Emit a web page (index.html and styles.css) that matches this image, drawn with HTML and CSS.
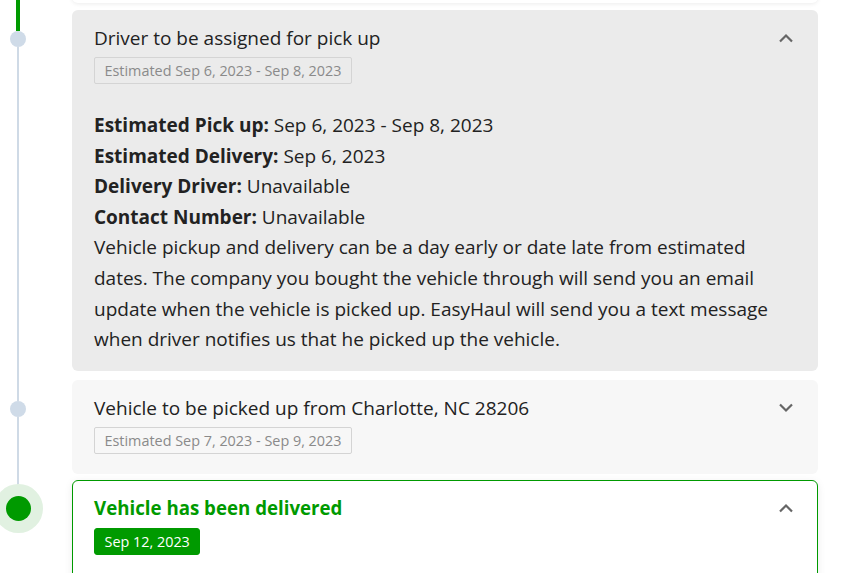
FILE: index.html
```html
<!DOCTYPE html>
<html>
<head>
<meta charset="utf-8">
<link rel="stylesheet" href="styles.css">
</head>
<body>
<div class="timeline">
  <div class="item item-prev">
    <div class="rail"><span class="seg seg-green grow"></span></div>
    <div class="card card-white"><div class="spacer"></div></div>
  </div>

  <div class="item">
    <div class="rail">
      <span class="seg seg-green top"></span>
      <span class="dot"></span>
      <span class="seg grow"></span>
    </div>
    <div class="card card-open">
      <div class="head">
        <div class="head-text">
          <div class="title">Driver to be assigned for pick up</div>
          <span class="badge">Estimated Sep 6, 2023 - Sep 8, 2023</span>
        </div>
        <svg class="chev" viewBox="0 0 16 10" width="16" height="10"><path d="M2 8.5 L8 2.5 L14 8.5" fill="none" stroke="#666" stroke-width="2.2"/></svg>
      </div>
      <div class="body">
        <p><b>Estimated Pick up:</b> Sep 6, 2023 - Sep 8, 2023</p>
        <p><b>Estimated Delivery:</b> Sep 6, 2023</p>
        <p><b>Delivery Driver:</b> Unavailable</p>
        <p><b>Contact Number:</b> Unavailable</p>
        <p>Vehicle pickup and delivery can be a day early or date late from estimated dates. The company you bought the vehicle through will send you an email update when the vehicle is picked up. EasyHaul will send you a text message when driver notifies us that he picked up the vehicle.</p>
      </div>
    </div>
  </div>

  <div class="item">
    <div class="rail">
      <span class="seg top2"></span>
      <span class="dot"></span>
      <span class="seg grow"></span>
    </div>
    <div class="card card-closed">
      <div class="head">
        <div class="head-text">
          <div class="title">Vehicle to be picked up from Charlotte, NC 28206</div>
          <span class="badge">Estimated Sep 7, 2023 - Sep 9, 2023</span>
        </div>
        <svg class="chev" viewBox="0 0 16 10" width="16" height="10"><path d="M2 1.5 L8 7.5 L14 1.5" fill="none" stroke="#666" stroke-width="2.2"/></svg>
      </div>
    </div>
  </div>

  <div class="item">
    <div class="rail">
      <span class="seg top3"></span>
      <span class="dot-big"></span>
    </div>
    <div class="card card-done">
      <div class="head">
        <div class="head-text">
          <div class="title title-green">Vehicle has been delivered</div>
          <span class="badge badge-green">Sep 12, 2023</span>
        </div>
        <svg class="chev" viewBox="0 0 16 10" width="16" height="10"><path d="M2 8.5 L8 2.5 L14 8.5" fill="none" stroke="#666" stroke-width="2.2"/></svg>
      </div>
      <div class="spacer2"></div>
    </div>
  </div>
</div>
</body>
</html>
```

FILE: styles.css
```css
html, body {
  margin: 0;
  padding: 0;
  background: #ffffff;
  overflow: hidden;
}
body {
  font-family: "Open Sans", "Noto Sans", "Liberation Sans", sans-serif;
  color: #222;
}
.timeline {
  width: 818px;
  margin-top: -60px;
}
.item {
  display: grid;
  grid-template-columns: 36px 1fr;
  column-gap: 36px;
}
.rail {
  display: flex;
  flex-direction: column;
  align-items: center;
}
.seg {
  width: 2px;
  background: #cfdae6;
}
.seg-green {
  width: 4px;
  background: #009a00;
}
.grow { flex: 1; }
.top { height: 21px; }
.top2 { height: 21px; }
.top3 { height: 16px; }
.dot {
  width: 16px;
  height: 16px;
  border-radius: 50%;
  background: #cfdbe8;
  flex: none;
}
.dot-big {
  width: 25px;
  height: 25px;
  border-radius: 50%;
  background: #009a00;
  box-shadow: 0 0 0 12px #e1f1e1;
  flex: none;
}
.card {
  border-radius: 6px;
  margin-bottom: 7px;
}
.card-white {
  background: #fff;
  box-shadow: 0 1px 4px rgba(0,0,0,0.08);
}
.spacer { height: 63px; }
.card-open {
  background: #ebebeb;
  margin-bottom: 9px;
}
.card-closed {
  background: #f7f7f7;
  margin-bottom: 6px;
}
.card-done {
  background: #fff;
  border: 1px solid #009a00;
  box-shadow: 0 2px 8px rgba(0,0,0,0.08);
}
.spacer2 { height: 30px; }
.head {
  display: flex;
  justify-content: space-between;
  align-items: flex-start;
  padding: 16px 24px 0 22px;
}
.card-closed .head { padding-bottom: 20px; }
.card-done .head { padding: 15px 23px 0 21px; }
.head-text {
  display: flex;
  flex-direction: column;
  align-items: flex-start;
}
.title {
  font-size: 19px;
  line-height: 24px;
  color: #222;
}
.title-green {
  color: #009a00;
  font-weight: 700;
  font-size: 18.7px;
}
.badge {
  box-sizing: border-box;
  display: flex;
  align-items: center;
  height: 27px;
  margin-top: 7px;
  font-size: 14.4px;
  padding: 0 9.5px;
  border: 1px solid #d4d4d4;
  border-radius: 2px;
  color: #8a8a8a;
}
.badge-green {
  background: #009a00;
  border-color: #009a00;
  color: #fff;
  margin-top: 8px;
  border-radius: 3px;
}
.chev {
  margin-top: 7px;
}
.body {
  padding: 26px 24px 16px 22px;
  font-size: 19px;
  line-height: 30.6px;
  color: #222;
}
.body p { margin: 0; }
.body b { font-weight: 700; }
```
